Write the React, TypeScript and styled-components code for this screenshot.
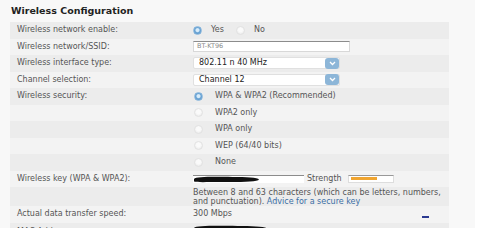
import styled, { createGlobalStyle } from "styled-components";

const GlobalStyle = createGlobalStyle`
  html, body {
    margin: 0;
    padding: 0;
    background: #ffffff;
  }
  body {
    font-family: "DejaVu Sans", Verdana, sans-serif;
  }
`;

type RowProps = { $dark?: boolean; $tall?: boolean; $top?: boolean };

function Radio({ checked }: { checked?: boolean }) {
  return <RadioDot $checked={checked} />;
}

// black marker strokes that hide private values in the screenshot
function Scribble({ width }: { width: number }) {
  const w = width;
  return (
    <ScribbleSvg $w={w} viewBox={`0 0 ${w} 8`}>
      <path
        d={`M1 4 C 3 1.5, ${w * 0.3} 1.8, ${w * 0.6} 2 C ${w * 0.8} 2, ${w - 1} 2.5, ${w} 4.5 C ${w - 1} 7, ${w * 0.7} 7.2, ${w * 0.4} 7 C ${w * 0.2} 7, 4 7.5, 1 6.5 Z`}
        fill="#111"
      />
    </ScribbleSvg>
  );
}

function SelectBox({ value }: { value: string }) {
  return (
    <Select>
      <SelectText>{value}</SelectText>
      <SelectButton>
        <svg width="7" height="5" viewBox="0 0 7 5">
          <path d="M1 1 L3.5 3.5 L6 1" stroke="#fff" strokeWidth="1.3" fill="none" />
        </svg>
      </SelectButton>
    </Select>
  );
}

const securityOptions = [
  { label: "WPA & WPA2 (Recommended)", checked: true },
  { label: "WPA2 only" },
  { label: "WPA only" },
  { label: "WEP (64/40 bits)" },
  { label: "None" },
];

export default function App() {
  return (
    <>
      <GlobalStyle />
      <Page>
        <Panel>
          <Title>Wireless Configuration</Title>
          <Table>
            <Row $dark>
              <Label>Wireless network enable:</Label>
              <Value>
                <Option>
                  <Radio checked />
                  <OptionText>Yes</OptionText>
                </Option>
                <Option>
                  <Radio />
                  <OptionText>No</OptionText>
                </Option>
              </Value>
            </Row>
            <Row>
              <Label>Wireless network/SSID:</Label>
              <Value>
                <TextInput>BT-KT96</TextInput>
              </Value>
            </Row>
            <Row $dark>
              <Label>Wireless interface type:</Label>
              <Value>
                <SelectBox value="802.11 n 40 MHz" />
              </Value>
            </Row>
            <Row>
              <Label>Channel selection:</Label>
              <Value>
                <SelectBox value="Channel 12" />
              </Value>
            </Row>
            {securityOptions.map((opt, i) => (
              <Row key={opt.label} $dark={i % 2 === 0}>
                <Label>{i === 0 ? "Wireless security:" : ""}</Label>
                <Value>
                  <SecurityOption>
                    <Radio checked={opt.checked} />
                    <OptionText>{opt.label}</OptionText>
                  </SecurityOption>
                </Value>
              </Row>
            ))}
            <Row>
              <Label>Wireless key (WPA &amp; WPA2):</Label>
              <Value>
                <KeyInput>
                  <Scribble width={66} />
                </KeyInput>
                <StrengthLabel>Strength</StrengthLabel>
                <StrengthBox>
                  <StrengthBar style={{ width: "26px" }} />
                </StrengthBox>
              </Value>
            </Row>
            <Row $dark $tall>
              <Label />
              <Help>
                Between 8 and 63 characters (which can be letters, numbers,
                and punctuation). <Link>Advice for a secure key</Link>
              </Help>
            </Row>
            <Row>
              <Label>Actual data transfer speed:</Label>
              <Value>
                300 Mbps
                <Dash />
              </Value>
            </Row>
            <Row $dark $top>
              <Label>MAC Address:</Label>
              <Value>
                <Scribble width={74} />
              </Value>
            </Row>
          </Table>
        </Panel>
      </Page>
    </>
  );
}

const Page = styled.div`
  width: 495px;
  height: 250px;
  background: #ffffff;
`;

const Panel = styled.div`
  width: 475px;
  height: 228px;
  background: #f8f8f8;
  padding-left: 10px;
  box-sizing: border-box;
  overflow: hidden;
`;

const Title = styled.div`
  height: 22px;
  line-height: 21px;
  padding-left: 1px;
  font-size: 9.5px;
  font-weight: bold;
  color: #222;
`;

const Table = styled.div`
  width: 439px;
  display: flex;
  flex-direction: column;
`;

const Row = styled.div<RowProps>`
  display: grid;
  grid-template-columns: 183px 1fr;
  align-items: ${(p) => (p.$top ? "start" : "center")};
  padding-top: ${(p) => (p.$top ? "1px" : "0")};
  flex-shrink: 0;
  height: ${(p) => (p.$tall ? "19px" : "16.5px")};
  background: ${(p) => (p.$dark ? "#ececec" : "#f3f3f3")};
  font-size: 8px;
  line-height: 10px;
  color: #555;
  box-sizing: border-box;

  & > div:first-child {
    padding-top: ${(p) => (p.$top ? "3px" : "0")};
  }
`;

const Label = styled.div`
  padding-left: 7px;
  white-space: nowrap;
`;

const Value = styled.div`
  position: relative;
  display: flex;
  align-items: center;
  white-space: nowrap;
`;

const Option = styled.div`
  display: flex;
  align-items: center;
  gap: 9px;
  margin-right: 12px;
`;

const SecurityOption = styled(Option)`
  gap: 12px;
  padding-left: 1px;
`;

const OptionText = styled.span`
  color: #555;
`;

const RadioDot = styled.span<{ $checked?: boolean }>`
  width: 9px;
  height: 9px;
  border-radius: 50%;
  box-sizing: border-box;
  background: ${(p) =>
    p.$checked
      ? "radial-gradient(circle at 50% 45%, #d8ecfa 0 1.5px, #6fa7d6 2.5px, #4d8cc4 100%)"
      : "radial-gradient(circle at 50% 40%, #fafafa 0 2px, #e6e6e6 100%)"};
  border: 1px solid ${(p) => (p.$checked ? "#8ab7dd" : "#e2e2e2")};
`;

const TextInput = styled.div`
  width: 157px;
  height: 11px;
  box-sizing: border-box;
  background: #fff;
  border: 1px solid #d8d8d8;
  border-top-color: #8c8c8c;
  font-size: 6.5px;
  line-height: 9px;
  padding-left: 3px;
  color: #8a8a8a;
`;

const Select = styled.div`
  width: 147px;
  height: 12px;
  box-sizing: border-box;
  display: flex;
  align-items: center;
  justify-content: space-between;
  background: #fff;
  border: 1px solid #e0e0e0;
  border-radius: 2px;
`;

const SelectText = styled.span`
  padding-left: 5px;
  font-size: 8px;
  color: #222;
`;

const SelectButton = styled.span`
  width: 14px;
  height: 11px;
  display: flex;
  align-items: center;
  justify-content: center;
  background: #8db6d8;
  border-radius: 3px;
`;

const KeyInput = styled.div`
  width: 111px;
  height: 8px;
  box-sizing: border-box;
  background: #fff;
  border-top: 1px solid #8c8c8c;
  display: flex;
  align-items: center;
`;

const ScribbleSvg = styled.svg<{ $w: number }>`
  display: block;
  flex-shrink: 0;
  width: ${(p) => p.$w}px;
  height: 8px;
  overflow: visible;
`;

const StrengthLabel = styled.span`
  margin-left: 3px;
  margin-right: 6px;
`;

const StrengthBox = styled.div`
  width: 46px;
  height: 8px;
  box-sizing: border-box;
  background: #fff;
  border: 1px solid #ddd;
  border-top-color: #999;
  display: flex;
  align-items: center;
  padding-left: 2px;
`;

const StrengthBar = styled.div`
  height: 3px;
  background: #f0a531;
`;

const Help = styled.div`
  font-size: 8px;
  line-height: 9px;
  color: #555;
`;

const Link = styled.span`
  color: #3b6ea5;
`;

const Dash = styled.span`
  position: absolute;
  left: 229px;
  top: 7px;
  width: 7px;
  height: 2px;
  background: #2b3990;
`;
